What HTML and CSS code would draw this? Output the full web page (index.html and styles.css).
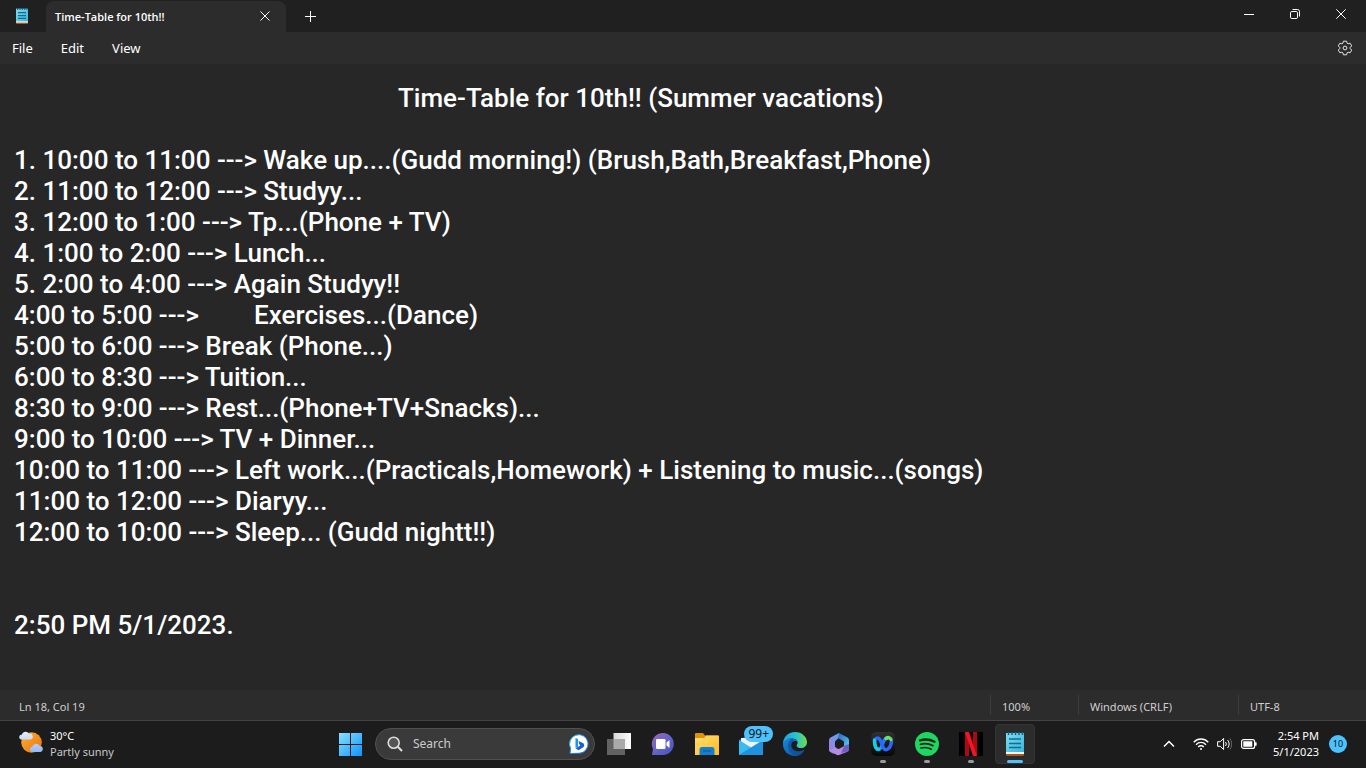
FILE: index.html
```html
<!DOCTYPE html>
<html lang="en">
<head>
<meta charset="utf-8">
<meta name="viewport" content="width=device-width, initial-scale=1">
<title>Time-Table for 10th!!</title>
<link rel="stylesheet" href="styles.css">
</head>
<body>
<svg class="defs" aria-hidden="true">
  <defs>
    <linearGradient id="paper" x1="0" y1="0" x2="1" y2="1"><stop offset="0" stop-color="#7fdcf3"/><stop offset="1" stop-color="#3ab4d8"/></linearGradient>
    <symbol id="notepad" viewBox="0 0 24 24">
      <path d="M3 20h18v2.500a1.500 1.500 0 0 1-1.500 1.500h-15A1.500 1.500 0 0 1 3 22.500z" fill="#a8571a"/>
      <path d="M3 19h18v3H3z" fill="#f7f4ee"/>
      <path d="M3 1h18v19H3z" fill="url(#paper)"/>
      <path d="M5.500 0v3M9 0v3M12.500 0v3M16 0v3M19.500 0v3" stroke="#14607f" stroke-width="1.500"/>
      <path d="M6 7h12M6 11.500h12M6 15.500h12" stroke="#0f6c92" stroke-width="1.700"/>
    </symbol>
  </defs>
</svg>
<main class="window">
  <header class="titlebar">
    <svg class="app-icon"><use href="#notepad"/></svg>
    <div class="tab">
      <span class="tab-title">Time-Table for 10th!!</span>
      <button class="tab-close" aria-label="Close tab"><svg width="10" height="10" viewBox="0 0 10 10"><path d="M.5.5l9 9M9.500.5l-9 9" stroke="#fff"/></svg></button>
    </div>
    <button class="new-tab" aria-label="New tab"><svg width="11" height="11" viewBox="0 0 11 11"><path d="M5.500 0v11M0 5.500h11" stroke="#fff"/></svg></button>
    <div class="controls">
      <button aria-label="Minimize"><svg width="10" height="10" viewBox="0 0 10 10"><path d="M0 5.500h10" stroke="#fff"/></svg></button>
      <button aria-label="Restore"><svg width="10" height="10" viewBox="0 0 10 10" fill="none" stroke="#fff"><rect x=".5" y="2.500" width="7" height="7" rx="1.300"/><path d="M2.500.5h5a2 2 0 0 1 2 2v5"/></svg></button>
      <button aria-label="Close"><svg width="10" height="10" viewBox="0 0 10 10"><path d="M.3.3l9.400 9.400M9.700.3L.3 9.700" stroke="#fff"/></svg></button>
    </div>
  </header>
  <nav class="menubar">
    <button>File</button><button>Edit</button><button>View</button>
    <button class="settings" aria-label="Settings"><svg width="16" height="16" viewBox="0 0 16 16" fill="none" stroke="#e6e6e6"><path d="M6.400 1.200h3.200l.5 2 1 .6 2-.6 1.600 2.700-1.500 1.500v1.200l1.500 1.500-1.600 2.700-2-.6-1 .6-.5 2H6.400l-.5-2-1-.6-2 .6-1.600-2.700 1.500-1.500V7.400L1.300 5.900l1.600-2.700 2 .6 1-.6z" stroke-linejoin="round"/><circle cx="8" cy="8" r="1.900"/></svg></button>
  </nav>
  <textarea class="editor" aria-label="Text editor" spellcheck="false">&#9;&#9;&#9;&#9;&#9;&#9;&#9;&#9;Time-Table for 10th!! (Summer vacations)

1. 10:00 to 11:00 ---&gt; Wake up....(Gudd morning!) (Brush,Bath,Breakfast,Phone)
2. 11:00 to 12:00 ---&gt; Studyy...
3. 12:00 to 1:00 ---&gt; Tp...(Phone + TV)
4. 1:00 to 2:00 ---&gt; Lunch...
5. 2:00 to 4:00 ---&gt; Again Studyy!!
4:00 to 5:00 ---&gt;&#9;&#9;Exercises...(Dance)
5:00 to 6:00 ---&gt; Break (Phone...)
6:00 to 8:30 ---&gt; Tuition...
8:30 to 9:00 ---&gt; Rest...(Phone+TV+Snacks)...
9:00 to 10:00 ---&gt; TV + Dinner...
10:00 to 11:00 ---&gt; Left work...(Practicals,Homework) + Listening to music...(songs)
11:00 to 12:00 ---&gt; Diaryy...
12:00 to 10:00 ---&gt; Sleep... (Gudd nightt!!)


2:50 PM 5/1/2023.</textarea>
  <footer class="statusbar">
    <span class="position">Ln 18, Col 19</span>
    <span class="cell zoom">100%</span>
    <span class="cell eol">Windows (CRLF)</span>
    <span class="cell encoding">UTF-8</span>
  </footer>
</main>
<footer class="taskbar">
  <button class="weather">
    <svg width="24" height="24" viewBox="0 0 24 24"><defs><linearGradient id="sun" x1="0" y1="0" x2="1" y2="1"><stop offset="0" stop-color="#fbb52b"/><stop offset="1" stop-color="#ef6d12"/></linearGradient><linearGradient id="cloud" x1="0" y1="0" x2="0" y2="1"><stop offset="0" stop-color="#e4efff"/><stop offset="1" stop-color="#96b9f3"/></linearGradient></defs><circle cx="12.500" cy="12.500" r="10.300" fill="url(#sun)"/><path d="M2.500 9.500a2.400 2.400 0 0 1 .2-4.800A4 4 0 0 1 10 3.800a2.900 2.900 0 0 1 1.600 5.700zM13 22a2.700 2.700 0 0 1 .1-5.300 4.200 4.200 0 0 1 7.700-.8A3.100 3.100 0 0 1 21.500 22z" fill="url(#cloud)"/></svg>
    <span class="weather-text"><span class="temp">30°C</span><span>Partly sunny</span></span>
  </button>
  <div class="dock">
    <button class="task start" aria-label="Start"><svg width="24" height="24" viewBox="0 0 24 24"><defs><linearGradient id="win" gradientUnits="userSpaceOnUse" x1="0" y1="0" x2="24" y2="24"><stop offset="0" stop-color="#8be2ff"/><stop offset="1" stop-color="#0b91ff"/></linearGradient></defs><path d="M0 1h11v11H0zM12 1h11v11H12zM0 13h11v11H0zM12 13h11v11H12z" fill="url(#win)"/></svg></button>
    <label class="search">
      <svg width="16" height="16" viewBox="0 0 16 16" fill="none" stroke="#ddd" stroke-width="1.600"><circle cx="6.700" cy="6.700" r="5.500" fill="#555"/><path d="M10.800 10.800l4.200 4.200" stroke-width="2"/></svg>
      <input type="text" placeholder="Search" aria-label="Search">
      <svg width="20" height="20" viewBox="0 0 20 20"><defs><linearGradient id="bing" x1="0" y1="0" x2="1" y2="1"><stop offset="0" stop-color="#24c4ee"/><stop offset="1" stop-color="#1652dd"/></linearGradient></defs><path d="M1 19.500l.7-5A9.300 9.300 0 1 1 10 19.300z" fill="#fff" stroke="url(#bing)"/><path d="M6.500 4l2.500 1v7.500L6.500 14z" fill="#2094ea"/><path d="M9.500 7l4.400 1.900a2.700 2.700 0 0 1 .4 4.300l-4.800 3-3-1.900 4.800-2.700-1.100-1.500z" fill="#1760d8"/></svg>
    </label>
    <button class="task" aria-label="Task view"><svg width="24" height="24" viewBox="0 0 24 24"><defs><linearGradient id="tv"><stop offset="0" stop-color="#d8d8d8"/><stop offset="1" stop-color="#fff"/></linearGradient></defs><path d="M6.500 1H24v16H6.500z" fill="url(#tv)"/><path d="M0 7h18v16H0z" fill="#626262"/><path d="M6.500 7H18v10H6.500z" fill="#aaa"/></svg></button>
    <button class="task" aria-label="Chat"><svg width="24" height="24" viewBox="0 0 24 24"><defs><linearGradient id="chat" x1="0" y1="0" x2="1" y2="1"><stop offset="0" stop-color="#9d67ae"/><stop offset=".5" stop-color="#6464c8"/><stop offset="1" stop-color="#4850be"/></linearGradient></defs><path d="M1 23l1-6A11 11 0 1 1 12 23z" fill="url(#chat)"/><rect x="5" y="7" width="9.500" height="10" rx="1.300" fill="#fff"/><path d="M15.500 10.500L18.500 8v8l-3-2.500z" fill="#fff"/></svg></button>
    <button class="task" aria-label="File Explorer"><svg width="24" height="24" viewBox="0 0 24 24"><defs><linearGradient id="folder" x1="0" y1="0" x2="1" y2="1"><stop offset="0" stop-color="#ffdc72"/><stop offset="1" stop-color="#ffbd20"/></linearGradient></defs><path d="M0 2a1 1 0 0 1 1-1h7l2 2.500h13a1 1 0 0 1 1 1V9H0z" fill="#dc9404"/><path d="M0 6h9l2-2.500h12a1 1 0 0 1 1 1V23H0z" fill="url(#folder)"/><path d="M4.500 23v-5.500A2.500 2.500 0 0 1 7 15h10a2.500 2.500 0 0 1 2.500 2.500V23z" fill="#147fd0"/><path d="M8 19h8" stroke="#07599c"/></svg></button>
    <button class="task" aria-label="Mail"><svg width="24" height="24" viewBox="0 0 24 24"><path d="M0 8L12 1l12 7v15H0z" fill="#0b64b7"/><path d="M2 6h20v7l-10 4L2 10z" fill="#f1f1f5"/><path d="M0 8l24 15H0z" fill="#35bdf2"/><path d="M24 8v15H0z" fill="#1e91df"/></svg><span class="badge">99+</span></button>
    <button class="task" aria-label="Edge"><svg width="24" height="24" viewBox="0 0 24 24"><defs><linearGradient id="edge"><stop offset="0" stop-color="#1aa3e4"/><stop offset=".55" stop-color="#2ac3cf"/><stop offset="1" stop-color="#70dd43"/></linearGradient><linearGradient id="edgeb" x1="0" y1="0" x2="1" y2="1"><stop offset="0" stop-color="#168bd9"/><stop offset="1" stop-color="#0a4b9c"/></linearGradient></defs><path d="M0 12C0 5 5 0 12 0s12 5 12 10c0 4-3 6-6 6-4 0-5-2-4-3.500 2-3-1-6-5-6-4 0-7 2-9 5.500z" fill="url(#edge)"/><path d="M0 12c1-4 5-6 9-5.500 3 .4 4 1.500 5 3-4-1.500-6 1-6 4 0 4 4 6.500 8 6 2.500-.3 4-1.300 5.500-2C19.500 21.500 16 24 12 24 5 24 0 19 0 12z" fill="url(#edgeb)"/><path d="M9 6.500c-4 3-5 7-3 11 1.500 3.500 4.500 5.800 8.500 6.200C18 23 20 21 21.500 17.500c-4 2.500-9 2.500-12-1-2-2.500-1.300-6 1.500-7.500z" fill="#114d9d" opacity=".75"/></svg></button>
    <button class="task" aria-label="Microsoft 365"><svg width="24" height="24" viewBox="0 0 24 24"><defs><linearGradient id="m1" x1="1" y1="0" x2="0" y2="1"><stop offset="0" stop-color="#57a5ef"/><stop offset="1" stop-color="#ae78dc"/></linearGradient><linearGradient id="m2" x1="0" y1="0" x2="1" y2="1"><stop offset="0" stop-color="#2863c0"/><stop offset="1" stop-color="#55d3fc"/></linearGradient></defs><path d="M12 1L3.500 5.500Q2 6.500 2 8v10q0 1.500 2 2.500l3 1.500 3-5.500-2-2v-5l4-4z" fill="url(#m1)"/><path d="M12 1l8.500 4.500Q22 6.500 22 8v8l-5-2V9.500L11 6z" fill="url(#m2)"/><path d="M2 18.500L7.500 16l4.500 1 5-3 5 2v1.500q0 1.500-1.500 2.300L12 23q-1 .3-2 0z" fill="#b68be4"/><path d="M17 14l5-2v5.500q0 1.500-1.500 2.300L14 21z" fill="#6353b9" opacity=".8"/></svg></button>
    <button class="task running" aria-label="Webex"><svg width="24" height="24" viewBox="0 0 24 24" fill="none" stroke-linecap="round"><defs><linearGradient id="wx"><stop offset="0" stop-color="#10d5e8"/><stop offset="1" stop-color="#235cff"/></linearGradient><linearGradient id="wxbg" x1="0" y1="0" x2="0" y2="1"><stop offset="0" stop-color="#303030"/><stop offset="1" stop-color="#080808"/></linearGradient></defs><rect width="24" height="24" rx="5" fill="url(#wxbg)"/><path d="M3.500 8c0 6 1.500 9.500 4 9.500C12 17.500 11.500 6 16 6" stroke="url(#wx)" stroke-width="3.500"/><path d="M4 7.500c3-3 5-1 6.500 3.500 1.500 5 3 7.500 5.500 6.500s4-4 4.500-8" stroke="#2d66ff" stroke-width="3.500"/><path d="M15 6.500c2-1.500 4-1 5 1" stroke="#6bdf6e" stroke-width="3.500"/><path d="M3.500 8c.3 5 1.500 9 4 9" stroke="#12cfe5" stroke-width="3"/></svg></button>
    <button class="task running" aria-label="Spotify"><svg width="24" height="24" viewBox="0 0 24 24" fill="none" stroke="#18251c" stroke-linecap="round"><circle cx="12" cy="12" r="12" fill="#1ed760" stroke="none"/><path d="M5 8.400c5-1.500 10-1 14.500 1.400" stroke-width="2.300"/><path d="M5.500 12.300c4.500-1.200 8.500-.7 12.300 1.300" stroke-width="1.900"/><path d="M6 16c3.800-.9 7.200-.5 10.300 1.200" stroke-width="1.600"/></svg></button>
    <button class="task running" aria-label="Netflix"><svg width="24" height="24" viewBox="0 0 24 24"><path d="M0 0h24v24H0z" fill="#000"/><path d="M6 0h4v24H6zM14 0h4v24h-4z" fill="#b20710"/><path d="M6 0h4l8 24h-4z" fill="#ed1823"/></svg></button>
    <button class="task running active" aria-label="Notepad"><svg width="24" height="24"><use href="#notepad"/></svg></button>
  </div>
  <div class="tray">
    <button class="chevron" aria-label="Show hidden icons"><svg width="12" height="8" viewBox="0 0 12 8"><path d="M1 6.500L6 1.500l5 5" fill="none" stroke="#fff" stroke-width="1.500"/></svg></button>
    <button class="system" aria-label="Network, volume and battery">
      <svg width="16" height="14" viewBox="0 0 16 14" fill="none" stroke="#fff" stroke-width="1.300"><path d="M.7 5.200c4-4.300 10.600-4.300 14.600 0M3 7.700c2.800-3 7.200-3 10 0M5.200 10c1.600-1.700 4-1.700 5.600 0"/><circle cx="8" cy="12" r="1" fill="#fff" stroke="none"/></svg>
      <svg width="16" height="14" viewBox="0 0 16 14" fill="none" stroke="#fff"><path d="M.6 4.700h2.600L6.600 1.500v11L3.200 9.300H.6z" stroke-linejoin="round"/><path d="M8.500 5a3 3 0 0 1 0 4M10.600 3a6 6 0 0 1 0 8"/><path d="M12.700 1.300a9 9 0 0 1 0 11.400" stroke="#666"/></svg>
      <svg width="16" height="10" viewBox="0 0 16 10"><rect x=".6" y=".6" width="13" height="8.800" rx="2" fill="none" stroke="#fff" stroke-width="1.200"/><path d="M2.300 2.300h9v5.400h-9zM14 3.300h1.600v3.400H14z" fill="#fff"/></svg>
    </button>
    <button class="clock"><span>2:54 PM</span><span>5/1/2023</span></button>
    <button class="notifications" aria-label="10 notifications">10</button>
  </div>
</footer>
</body>
</html>
```

FILE: styles.css
```css
* { box-sizing: border-box; }
body {
  margin: 0;
  height: 100vh;
  display: flex;
  flex-direction: column;
  background: #272727;
  color: #fff;
  font: 12px/16px "Open Sans", "Noto Sans", sans-serif;
  overflow: hidden;
}
button {
  padding: 0;
  border: 0;
  background: none;
  color: inherit;
  font: inherit;
}
svg { display: block; flex: none; }
.defs { position: absolute; width: 0; height: 0; }
.window { flex: 1; min-height: 0; display: flex; flex-direction: column; }

.titlebar { display: flex; height: 32px; background: #202020; }
.app-icon { width: 16px; height: 16px; margin: 8px 16px 0 14px; }
.tab {
  display: flex;
  align-items: center;
  justify-content: space-between;
  width: 240px;
  margin-top: 1px;
  padding: 0 12px 0 9px;
  border-radius: 8px 8px 0 0;
  background: #2c2c2c;
}
.tab-title { font-size: 11px; font-weight: 600; }
.tab-close { display: grid; place-items: center; width: 18px; height: 26px; padding-bottom: 2px; }
.new-tab { display: grid; place-items: center; width: 49px; }
.controls { display: flex; margin-left: auto; height: 28px; padding-right: 2px; }
.controls button { display: grid; place-items: center; width: 46px; }

.menubar {
  display: flex;
  align-items: center;
  gap: 28px;
  height: 32px;
  padding: 0 13px 0 12px;
  background: #2c2c2c;
  font: 13px/16px "Noto Sans", sans-serif;
}
.settings { margin-left: auto; }

.editor {
  flex: 1;
  min-height: 0;
  width: 100%;
  margin: 0;
  padding: 19px 14px 0;
  border: 0;
  outline: 0;
  resize: none;
  overflow: hidden;
  background: #272727;
  color: #fff;
  font: 500 26px/31px Roboto, sans-serif;
  tab-size: 48px;
}

.statusbar {
  display: flex;
  align-items: center;
  height: 30px;
  padding-left: 19px;
  background: #2c2c2c;
  color: #cfcfcf;
  font: 11px/16px "Noto Sans", sans-serif;
}
.position { margin-right: auto; padding-top: 4px; }
.cell { padding: 4px 0 0 11px; border-left: 1px solid #3c3c3c; }
.zoom { width: 88px; }
.eol { width: 160px; }
.encoding { width: 128px; }

.taskbar {
  display: grid;
  grid-template-columns: 1fr auto 1fr;
  height: 48px;
  padding-bottom: 2px;
  border-top: 1px solid #444;
  background: #1c1c1c;
}
.weather, .tray { font: 11px/16px "Noto Sans", sans-serif; }
.weather { display: flex; align-items: center; gap: 7px; padding-left: 19px; justify-self: start; color: #c8c8c8; text-align: left; }
.weather svg { margin-bottom: 4px; }
.weather-text { display: flex; flex-direction: column; }
.temp { color: #fff; }
.dock { display: flex; align-items: center; gap: 4px; }
.task {
  position: relative;
  display: grid;
  place-items: center;
  width: 40px;
  height: 40px;
  border-radius: 4px;
}
.search {
  display: flex;
  align-items: center;
  width: 220px;
  height: 32px;
  padding: 0 5px 0 11px;
  border: 1px solid #505050;
  border-radius: 16px;
  background: #3a3a3a;
}
.search input {
  flex: 1;
  min-width: 0;
  padding: 0 10px;
  border: 0;
  outline: 0;
  background: none;
  color: #fff;
  font: 12px/16px "Noto Sans", sans-serif;
}
.search input::placeholder { color: #ccc; opacity: 1; }
.badge {
  position: absolute;
  top: 2px;
  right: -2px;
  padding: 0 4px;
  border-radius: 8px;
  background: #4cc2ff;
  color: #111;
  font: 12px/16px "Noto Sans", sans-serif;
}
.running::after {
  content: "";
  position: absolute;
  bottom: 1px;
  left: 17px;
  width: 6px;
  height: 3px;
  border-radius: 2px;
  background: #9a9a9a;
}
.active { background: #2c2c2c; border: 1px solid #353535; }
.active::after { bottom: 0; left: 11px; width: 16px; background: #4cc2ff; }
.tray { display: flex; align-items: center; justify-self: end; padding-right: 19px; }
.chevron { margin-right: 18px; }
.system { display: flex; align-items: center; gap: 8px; margin-right: 16px; }
.clock { display: flex; flex-direction: column; align-items: flex-end; margin-right: 10px; }
.notifications { width: 18px; height: 18px; border-radius: 9px; background: #4cc2ff; color: #111; font-size: 9px; }
```
